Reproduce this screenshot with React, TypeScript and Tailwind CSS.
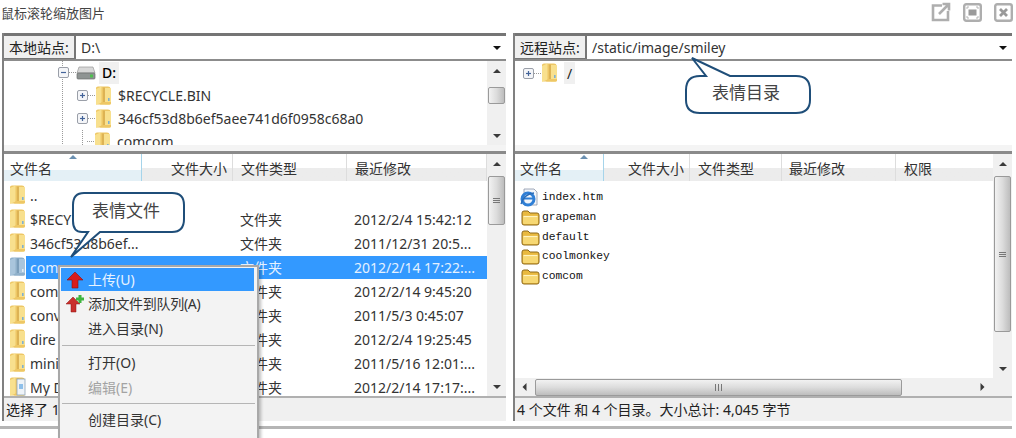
const sans = "font-['Noto_Sans','Noto_Sans_CJK_SC',sans-serif]";

const leftRows = [
  { name: "..", type: "", date: "" },
  { name: "$RECY", type: "文件夹", date: "2012/2/4 15:42:12" },
  { name: "346cf53d8b6ef...", type: "文件夹", date: "2011/12/31 20:5..." },
  { name: "com", type: "文件夹", date: "2012/2/14 17:22:...", selected: true },
  { name: "com", type: "文件夹", date: "2012/2/14 9:45:20" },
  { name: "conv", type: "文件夹", date: "2011/5/3 0:45:07" },
  { name: "dire", type: "文件夹", date: "2012/2/4 19:25:45" },
  { name: "mini", type: "文件夹", date: "2011/5/16 12:01:..." },
  { name: "My D", type: "文件夹", date: "2012/2/14 17:17:...", doc: true },
];

const rightRows = ["index.htm", "grapeman", "default", "coolmonkey", "comcom"];

function TallFolder({ blue = false, doc = false }: { blue?: boolean; doc?: boolean }) {
  const light = blue ? "#a9c5dc" : "#f8e08e";
  const mid = blue ? "#8fb0cb" : "#eec765";
  const dark = blue ? "#6f93b0" : "#d2a64a";
  return (
    <svg width="17" height="22" viewBox="0 0 17 22" className="shrink-0">
      <path d="M1 3 Q1 1.5 3 1.5 H13 Q15.5 1.5 15.5 3.5 V18 Q15.5 19.5 14 19.5 H3 Q1 19.5 1 18 Z" fill={mid} />
      <path d="M1 4 L6.5 1.5 V17.5 L1 20 Z" fill={light} />
      <path d="M10 3 H15 Q16 3 16 4.5 V18 Q16 19.5 14.5 19.5 H10 Z" fill={light} />
      <path d="M9 2.5 V19" stroke={dark} strokeWidth="1.2" />
      <path d="M7 17 H16 V18.5 Q16 19.5 14.5 19.5 H5 Z" fill={mid} />
      <rect x="13" y="13" width="1.6" height="3" fill={blue ? "#dfeaf3" : "#7fb0d0"} />
      {doc && <rect x="8" y="3" width="8" height="16" fill="#eef3f8" stroke="#8fa3b5" strokeWidth="0.8" />}
      {doc && <rect x="10" y="8" width="4" height="5" fill="#8fc0ea" />}
    </svg>
  );
}

function OpenFolder() {
  return (
    <svg width="19" height="17" viewBox="0 0 19 17" className="shrink-0">
      <path d="M1 4 Q1 2 3 2 H7 L9 4 H16 Q18 4 18 6 V14 Q18 16 16 16 H3 Q1 16 1 14 Z" fill="#e9b93f" stroke="#8e6a1c" strokeWidth="1" />
      <path d="M2 8 Q2 7 3 7 H16 Q17 7 17 8 V14 Q17 15 16 15 H3 Q2 15 2 14 Z" fill="#f7d873" />
      <path d="M2.5 7.5 H16.5" stroke="#fff3c0" strokeWidth="1.2" />
    </svg>
  );
}

function IeIcon() {
  return (
    <svg width="20" height="19" viewBox="0 0 20 19" className="shrink-0">
      <path d="M4 1 H14 L17 4 V17 H4 Z" fill="#f2f5fa" stroke="#8a96a8" strokeWidth="0.8" />
      <circle cx="8" cy="11" r="6" fill="none" stroke="#2f7fd6" strokeWidth="3" />
      <path d="M3 10.5 H13" stroke="#2f7fd6" strokeWidth="2" />
      <path d="M1 16 Q4 6 14 5" fill="none" stroke="#2a6cb8" strokeWidth="1.4" />
    </svg>
  );
}

function Expander({ minus = false }: { minus?: boolean }) {
  return (
    <svg width="11" height="11" viewBox="0 0 11 11" className="shrink-0">
      <rect x="0.5" y="0.5" width="10" height="10" rx="1.5" fill="#f4f5f8" stroke="#9a9fa8" />
      <path d="M3 5.5 H8" stroke="#44639a" strokeWidth="1.2" />
      {!minus && <path d="M5.5 3 V8" stroke="#44639a" strokeWidth="1.2" />}
    </svg>
  );
}

function DriveIcon() {
  return (
    <svg width="20" height="14" viewBox="0 0 20 14" className="shrink-0">
      <path d="M3 1 H17 L19 7 H1 Z" fill="#d8d8d8" stroke="#9a9a9a" strokeWidth="0.7" />
      <rect x="1" y="7" width="18" height="6" rx="1" fill="#8f9493" stroke="#6a6e6d" strokeWidth="0.7" />
      <rect x="14" y="8.5" width="3" height="3" fill="#4fc04f" />
    </svg>
  );
}

function Arrow({ dir }: { dir: "up" | "down" | "left" | "right" }) {
  const d = {
    up: "M1 6 L5 2 L9 6 Z",
    down: "M1 3 L9 3 L5 7 Z",
    left: "M6.5 1 V9 L2.5 5 Z",
    right: "M3.5 1 V9 L7.5 5 Z",
  }[dir];
  return (
    <svg width="10" height="10" viewBox="0 0 10 10" className="shrink-0">
      <path d={d} fill="#3a3a3a" />
    </svg>
  );
}

function Grip() {
  return (
    <div className="flex flex-col gap-[1px]">
      <div className="w-[7px] h-[1px] bg-[#777]" />
      <div className="w-[7px] h-[1px] bg-[#777]" />
      <div className="w-[7px] h-[1px] bg-[#777]" />
    </div>
  );
}

function VScroll({ thumbTop, thumbHeight, grip = true }: { thumbTop: number; thumbHeight: number; grip?: boolean }) {
  return (
    <div className="w-[19px] shrink-0 h-full bg-[#f0f0f0] flex flex-col items-center">
      <div className="h-[22px] shrink-0 flex items-center justify-center">
        <Arrow dir="up" />
      </div>
      <div className="flex-1 w-full px-[1px]">
        <div
          className="w-[17px] border border-[#9a9a9a] rounded-[2px] bg-gradient-to-r from-[#f2f2f2] via-[#dcdcdc] to-[#bdbdbd] flex items-center justify-center"
          style={{ marginTop: thumbTop, height: thumbHeight }}
        >
          {grip && <Grip />}
        </div>
      </div>
      <div className="h-[18px] shrink-0 flex items-center justify-center">
        <Arrow dir="down" />
      </div>
    </div>
  );
}

function SiteBar({ label, value }: { label: string; value: string }) {
  return (
    <div className="h-[28px] shrink-0 flex border-t-[3px] border-[#757575] border-b-2 border-b-[#8c8c8c]">
      <div className="w-[72px] shrink-0 bg-[#f0f0f0] border-r-2 border-b border-[#777] flex items-center justify-center text-[14px] text-[#222]">
        {label}
      </div>
      <div className="flex-1 bg-white flex items-center pl-[5px] text-[14px] text-[#333]">{value}</div>
      <div className="w-[18px] flex items-center justify-center">
        <svg width="10" height="6" viewBox="0 0 10 6">
          <path d="M1 1 H9 L5 5 Z" fill="#111" />
        </svg>
      </div>
    </div>
  );
}

function Column({ label, className }: { label: string; className: string }) {
  return (
    <div className={`relative h-full bg-gradient-to-b from-white from-50% to-[#ececec] to-50% border-r border-[#dddddd] flex items-center pt-[2px] text-[14px] text-[#333] ${className}`}>
      {label}
    </div>
  );
}

function SortedColumn({ className }: { className: string }) {
  return (
    <div className={`relative h-full bg-gradient-to-b from-white from-60% to-[#e4f0f6] to-60% border-r border-[#a6d4ea] flex items-center pt-[2px] text-[14px] text-[#333] ${className}`}>
      文件名
      <svg width="10" height="5" viewBox="0 0 10 5" className="absolute top-0 left-[64px]">
        <path d="M1 5 L5 1 L9 5 Z" fill="#6a8fb0" />
      </svg>
    </div>
  );
}

function LocalPane() {
  return (
    <div className="w-[504px] ml-[2px] shrink-0 h-full flex flex-col border-l-2 border-[#808080]">
      <SiteBar label="本地站点:" value="D:\" />
      <div className="h-[84px] shrink-0 flex overflow-hidden">
        <div className="relative flex-1 overflow-hidden pl-[73px]">
          <svg width="60" height="85" viewBox="0 0 60 85" className="absolute top-0 left-0 pointer-events-none">
            <path d="M58.5 0 V85" stroke="#9a9a9a" strokeDasharray="1 1" />
          </svg>
          <div className="h-[23px] flex items-center -ml-[19px] relative">
            <Expander minus />
            <div className="w-[7px] border-t border-dotted border-[#999]" />
            <DriveIcon />
            <span className="ml-[3px] px-[3px] h-[22px] flex items-center bg-[#f0f0f0] text-[14px] font-medium">D:</span>
          </div>
          {[
            { name: "$RECYCLE.BIN", plus: true },
            { name: "346cf53d8b6ef5aee741d6f0958c68a0", plus: true },
            { name: "comcom", plus: false },
          ].map((row) => (
            <div key={row.name} className="h-[23px] flex items-center">
              {row.plus ? <Expander /> : <div className="w-[5px] ml-[5px] h-full border-l border-dotted border-[#999]" />}
              <div className="w-[7px] border-t border-dotted border-[#999]" />
              <TallFolder />
              <span className="ml-[6px] text-[14px] text-[#333] leading-none">{row.name}</span>
            </div>
          ))}
        </div>
        <VScroll thumbTop={4} thumbHeight={17} grip={false} />
      </div>
      <div className="h-[6px] shrink-0 bg-[#f4f4f4]" />
      <div className="h-[3px] shrink-0 bg-[#8a8a8a]" />
      <div className="flex-1 min-h-0 flex">
        <div className="flex-1 flex flex-col min-w-0">
          <div className="h-[27px] shrink-0 flex">
            <SortedColumn className="w-[138px] pl-[6px]" />
            <Column label="文件大小" className="w-[91px] justify-end pr-[5px]" />
            <Column label="文件类型" className="w-[114px] pl-[8px]" />
            <Column label="最近修改" className="flex-1 pl-[8px]" />
          </div>
          <div className="flex-1 overflow-hidden pt-[2px] bg-white">
            {leftRows.map((row, i) => (
              <div key={i} className="h-[24px] flex items-center text-[14px] text-[#333]">
                <div className="w-[22px] pl-[5px] shrink-0 flex">
                  <TallFolder blue={row.selected} doc={row.doc} />
                </div>
                <div className={`flex-1 min-w-0 h-[23px] flex items-center ${row.selected ? "bg-[#3399ff] text-[#e4f1ff]" : ""}`}>
                  <span className="w-[214px] pl-[4px] shrink-0 truncate">{row.name}</span>
                  <span className="w-[114px] shrink-0">{row.type}</span>
                  <span className="whitespace-nowrap">{row.date}</span>
                </div>
              </div>
            ))}
          </div>
        </div>
        <VScroll thumbTop={0} thumbHeight={49} />
      </div>
      <div className="h-[25px] shrink-0 border-t-2 border-[#b0b0b0] bg-[#f0f0f0] flex items-center pl-[2px] text-[14px] text-[#222]">
        选择了 1
      </div>
    </div>
  );
}

function RemotePane() {
  return (
    <div className="w-[499px] ml-[7px] shrink-0 h-full flex flex-col border-l-2 border-[#808080]">
      <SiteBar label="远程站点:" value="/static/image/smiley" />
      <div className="h-[84px] shrink-0 pl-[8px] flex items-start pt-[1px]">
        <div className="h-[22px] flex items-center">
          <Expander />
          <div className="w-[7px] border-t border-dotted border-[#999]" />
          <TallFolder />
          <span className="ml-[6px] px-[3px] h-[22px] flex items-center bg-[#f0f0f0] text-[14px] text-[#222]">/</span>
        </div>
      </div>
      <div className="h-[6px] shrink-0 bg-[#f4f4f4]" />
      <div className="h-[3px] shrink-0 bg-[#8a8a8a]" />
      <div className="flex-1 min-h-0 flex flex-col">
        <div className="flex-1 min-h-0 flex">
          <div className="flex-1 flex flex-col min-w-0">
            <div className="h-[27px] shrink-0 flex">
              <SortedColumn className="w-[89px] pl-[5px]" />
              <Column label="文件大小" className="w-[86px] justify-end pr-[5px]" />
              <Column label="文件类型" className="w-[92px] pl-[8px]" />
              <Column label="最近修改" className="w-[114px] pl-[7px]" />
              <Column label="权限" className="flex-1 pl-[8px] border-r-0" />
            </div>
            <div className="flex-1 pt-[7px] pl-[5px] bg-white">
              {rightRows.map((name, i) => (
                <div key={name} className="h-[19.7px] flex items-center gap-[2px]">
                  <div className="w-[20px] flex justify-center shrink-0">{i === 0 ? <IeIcon /> : <OpenFolder />}</div>
                  <span className="font-['Liberation_Mono',monospace] font-medium text-[11.3px] text-[#111]">{name}</span>
                </div>
              ))}
            </div>
          </div>
          <VScroll thumbTop={0} thumbHeight={156} />
        </div>
        <div className="h-[18px] shrink-0 bg-[#f0f0f0] flex items-center">
          <div className="w-[20px] flex justify-center">
            <Arrow dir="left" />
          </div>
          <div className="w-[367px] h-[17px] border border-[#9a9a9a] rounded-[2px] bg-gradient-to-b from-[#f2f2f2] via-[#dcdcdc] to-[#bdbdbd] flex items-center justify-center gap-[1px]">
            <div className="w-[1px] h-[7px] bg-[#777]" />
            <div className="w-[1px] h-[7px] bg-[#777] ml-[1px]" />
            <div className="w-[1px] h-[7px] bg-[#777] ml-[1px]" />
          </div>
          <div className="flex-1" />
          <div className="w-[60px] flex justify-center">
            <Arrow dir="right" />
          </div>
        </div>
      </div>
      <div className="h-[25px] shrink-0 border-t-2 border-[#b0b0b0] bg-[#f0f0f0] flex items-center pl-[2px] text-[14px] text-[#222]">
        4 个文件 和 4 个目录。大小总计: 4,045 字节
      </div>
    </div>
  );
}

function ContextMenu() {
  return (
    <div className="absolute left-[58px] top-[265px] w-[201px] h-[180px] bg-[#f3f3f3] border-2 border-[#a8a8a8] shadow-[2px_2px_3px_rgba(0,0,0,0.25)] pt-[1px] px-[1px] text-[14px] text-[#333]">
      <div className="h-[23px] bg-[#3399ff] text-[#e8f3ff] flex items-center w-[193px]">
        <svg width="18" height="18" viewBox="0 0 18 18" className="ml-[5px] shrink-0">
          <path d="M9 1 L17 9 H12 V17 H6 V9 H1 Z" fill="#d91c1c" stroke="#8c1010" strokeWidth="0.6" />
        </svg>
        <span className="ml-[4px]">上传(U)</span>
      </div>
      <div className="h-[25px] flex items-center">
        <svg width="22" height="20" viewBox="0 0 22 20" className="ml-[4px] shrink-0">
          <path d="M8 3 L15 10 H11 V18 H6 V10 H1 Z" fill="#c9302c" stroke="#8c1010" strokeWidth="0.5" />
          <path d="M15 1 V9 M11 5 H19" stroke="#3fb53f" strokeWidth="3" />
        </svg>
        <span className="ml-[1px] tracking-[-0.3px]">添加文件到队列(A)</span>
      </div>
      <div className="h-[25px] flex items-center pl-[27px]">进入目录(N)</div>
      <div className="h-[8px] flex items-center">
        <div className="w-full mx-[1px] h-[1px] bg-[#b5b5b5]" />
      </div>
      <div className="h-[25px] flex items-center pl-[27px] mt-[1px]">打开(O)</div>
      <div className="h-[24px] flex items-center pl-[27px] text-[#a3a3a3]">编辑(E)</div>
      <div className="h-[8px] flex items-center">
        <div className="w-full mx-[1px] h-[1px] bg-[#b5b5b5]" />
      </div>
      <div className="h-[25px] flex items-center pl-[27px]">创建目录(C)</div>
    </div>
  );
}

function Callout({ className, path, width, height, label, labelClass }: { className: string; path: string; width: number; height: number; label: string; labelClass: string }) {
  return (
    <div className={`absolute ${className}`}>
      <svg width={width} height={height} viewBox={`0 0 ${width} ${height}`} className="block">
        <path d={path} fill="#ffffff" stroke="#1f4e79" strokeWidth="2" />
      </svg>
      <span className={`absolute text-[17px] leading-[24px] text-[#444] whitespace-nowrap ${labelClass}`}>{label}</span>
    </div>
  );
}

export default function App() {
  return (
    <div className={`relative w-[1016px] h-[438px] bg-white overflow-hidden ${sans}`}>
      <div className="h-[33px] flex items-center justify-between pr-[3px]">
        <span className="text-[13px] text-[#444] pl-[1px] -mt-[5px]">鼠标滚轮缩放图片</span>
        <div className="flex items-center gap-[12px] -mt-[9px]">
          <svg width="20" height="20" viewBox="0 0 20 20">
            <path d="M11 3.5 H2 V18 H17 V9" fill="none" stroke="#aeaeae" strokeWidth="2.6" />
            <path d="M8 12 L17 3 M11.5 2 H18 V8.5" fill="none" stroke="#aeaeae" strokeWidth="2.6" />
          </svg>
          <svg width="19" height="19" viewBox="0 0 19 19">
            <rect x="1.2" y="1.2" width="16.6" height="16.6" rx="2" fill="none" stroke="#aeaeae" strokeWidth="2.4" />
            <rect x="5.5" y="6.5" width="8" height="6" fill="#9a9a9a" />
            <path d="M4 6 V4 H6 M13 4 H15 V6 M15 13 V15 H13 M6 15 H4 V13" fill="none" stroke="#aeaeae" strokeWidth="0.9" />
          </svg>
          <svg width="19" height="19" viewBox="0 0 19 19">
            <rect x="1.2" y="1.2" width="16.6" height="16.6" rx="2" fill="none" stroke="#aeaeae" strokeWidth="2.4" />
            <path d="M6 6 L13 13 M13 6 L6 13" stroke="#9a9a9a" strokeWidth="2.8" />
          </svg>
        </div>
      </div>
      <div className="h-[388px] flex">
        <LocalPane />
        <RemotePane />
      </div>
      <div className="h-[3px] mt-[5px] bg-[#b5b5b5] w-[1012px]" />
      <ContextMenu />
      <Callout
        className="left-[68px] top-[191px]"
        width={118}
        height={68}
        path="M16 2 H104 Q116 2 116 14 V28 Q116 41 104 41 H32 L3 66 L20 41 H14 Q5 41 5 30 V14 Q5 2 16 2 Z"
        label="表情文件"
        labelClass="left-[24px] top-[8px]"
      />
      <Callout
        className="left-[684px] top-[57px]"
        width={128}
        height={58}
        path="M8 1 L46 19 H112 Q126 19 126 33 V43 Q126 56 112 56 H16 Q2 56 2 43 V33 Q2 19 16 19 H22 Z"
        label="表情目录"
        labelClass="left-[28px] top-[24px]"
      />
    </div>
  );
}
